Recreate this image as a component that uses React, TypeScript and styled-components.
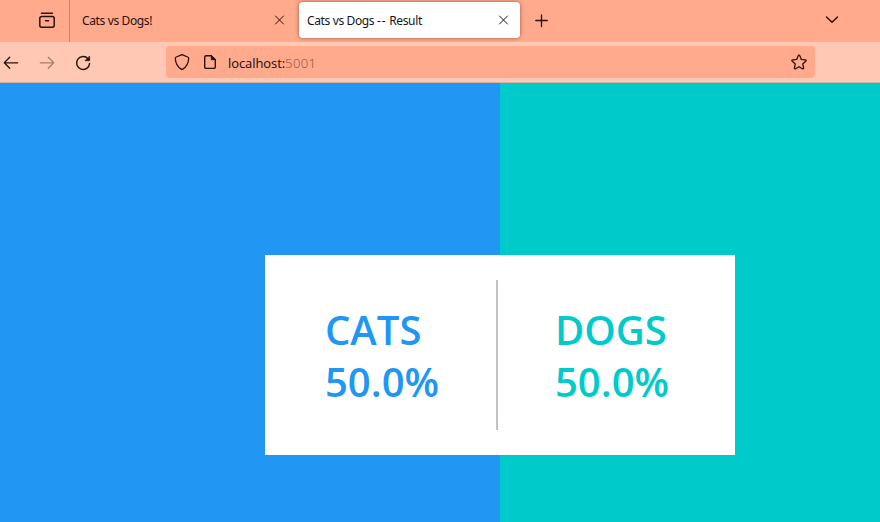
import React from "react";
import styled, { createGlobalStyle } from "styled-components";

const GlobalStyle = createGlobalStyle`
  * { box-sizing: border-box; }
  html, body { margin: 0; padding: 0; overflow: hidden; }
  body { font-family: "Open Sans", "Noto Sans", sans-serif; }
`;

const Window = styled.div`
  width: 880px;
  height: 522px;
  display: flex;
  flex-direction: column;
  overflow: hidden;
`;

const TabBar = styled.div`
  height: 42px;
  flex: none;
  display: flex;
  background: #ffaa8d;
  color: #2b1009;
`;

const ViewSlot = styled.div`
  width: 70px;
  padding: 12px 0 0 38px;
  border-right: 1px solid #cc826b;
`;

const Tab = styled.div<{ $active?: boolean }>`
  width: ${(p) => (p.$active ? "221px" : "229px")};
  height: ${(p) => (p.$active ? "36px" : "38px")};
  margin-top: ${(p) => (p.$active ? "2px" : "1px")};
  padding: 0 ${(p) => (p.$active ? "11px 0 8px" : "14px 0 12px")};
  display: flex;
  align-items: center;
  justify-content: space-between;
  border-radius: 4px;
  background: ${(p) => (p.$active ? "#ffffff" : "transparent")};
  box-shadow: ${(p) => (p.$active ? "0 0 4px rgba(90, 35, 15, 0.6)" : "none")};
  color: ${(p) => (p.$active ? "#15141a" : "#2b1009")};
`;

const TabTitle = styled.span`
  padding-top: 2px;
  font-family: "Noto Sans", "Open Sans", sans-serif;
  font-size: 12px;
  line-height: 16px;
  white-space: nowrap;
  letter-spacing: -0.37px;
`;

const Dashes = styled.span`
  letter-spacing: 0.9px;
`;

const NewTab = styled.div`
  padding: 13px 0 0 14px;
`;

const TabList = styled.div`
  margin-left: auto;
  padding: 12px 40px 0 0;
`;

const NavBar = styled.div`
  height: 41px;
  flex: none;
  display: flex;
  background: #ffc8b5;
  border-bottom: 1px solid #cdb4a8;
  color: #2b1009;
`;

const NavButtons = styled.div`
  width: 166px;
  padding: 13px 0 0 3px;
  display: flex;
  gap: 20px;
`;

const AddressBar = styled.div`
  width: 649px;
  height: 32px;
  margin-top: 4px;
  padding: 0 8px;
  display: flex;
  align-items: center;
  border-radius: 4px;
  background: #ffaa8d;
`;

const Address = styled.span`
  margin-left: 10px;
  padding-top: 2px;
  flex: 1;
  font-size: 13px;
  line-height: 18px;
  letter-spacing: -0.08px;
  color: #1b0b07;
`;

const Port = styled.span`
  font-weight: 300;
  letter-spacing: 0.4px;
  color: #8a4a37;
`;

const Glyph = styled.svg<{ $faded?: boolean; $gap?: number }>`
  display: block;
  flex: none;
  margin-left: ${(p) => p.$gap ?? 0}px;
  opacity: ${(p) => (p.$faded ? 0.4 : 1)};
  fill: none;
  stroke: currentColor;
  stroke-linecap: round;
  stroke-linejoin: round;
`;

const Stage = styled.main`
  flex: 1;
  padding: 172px 0 0 265px;
  background: linear-gradient(to right, #2196f3 500px, #00cbca 500px);
`;

const Card = styled.section`
  width: 470px;
  height: 200px;
  padding: 25px 0;
  display: flex;
  background: #ffffff;
`;

const Choice = styled.div<{ $color: string; $divided?: boolean }>`
  width: ${(p) => (p.$divided ? "233px" : "237px")};
  padding: 24px 0 0 ${(p) => (p.$divided ? "60px" : "57px")};
  border-right: ${(p) => (p.$divided ? "2px solid #c0c4ca" : "0")};
  color: ${(p) => p.$color};
  font-size: 40px;
  font-weight: 600;
  line-height: 52px;
`;

const CloseIcon = () => (
  <Glyph width="11" height="11" viewBox="0 0 11 11" strokeWidth="1">
    <path d="M1.500 1l8 8M9.500 1l-8 8" />
  </Glyph>
);

export default function App() {
  return (
    <>
      <GlobalStyle />
      <Window>
        <TabBar>
          <ViewSlot>
            <Glyph width="18" height="17" viewBox="0 0 18 17" strokeWidth="1.5">
              <path d="M3.5 1.2h10.8" />
              <rect x="1.8" y="4.5" width="14.4" height="10.7" rx="2" />
              <path d="M7.5 8.7h3" />
            </Glyph>
          </ViewSlot>
          <Tab>
            <TabTitle>Cats vs Dogs!</TabTitle>
            <CloseIcon />
          </Tab>
          <Tab $active>
            <TabTitle>
              Cats vs Dogs <Dashes>--</Dashes> Result
            </TabTitle>
            <CloseIcon />
          </Tab>
          <NewTab>
            <Glyph width="15" height="15" viewBox="0 0 15 15" strokeWidth="1.3">
              <path d="M7.5 2v11.5M1.8 7.5h11.5" />
            </Glyph>
          </NewTab>
          <TabList>
            <Glyph width="16" height="16" viewBox="0 0 16 16" strokeWidth="1.4">
              <path d="M2.5 5L8 10.2 13.5 5" />
            </Glyph>
          </TabList>
        </TabBar>
        <NavBar>
          <NavButtons>
            <Glyph width="16" height="16" viewBox="0 0 16 16" strokeWidth="1.3">
              <path d="M14.7 7.8H1.3M6.7 2.3L1.3 7.8l5.4 5.4" />
            </Glyph>
            <Glyph $faded width="16" height="16" viewBox="0 0 16 16" strokeWidth="1.3">
              <path d="M1.3 7.8h13.4M9.3 2.3l5.4 5.5-5.4 5.4" />
            </Glyph>
            <Glyph width="16" height="16" viewBox="0 0 16 16" strokeWidth="1.4">
              <path d="M13 3.7A6.5 6.5 0 1 0 14.6 8.4" />
              <path d="M14.6 1.5v4.2h-4.2z" fill="currentColor" strokeWidth="0.8" />
            </Glyph>
          </NavButtons>
          <AddressBar>
            <Glyph width="16" height="18" viewBox="0 0 16 18" strokeWidth="1.3">
              <path d="M8 1.6l5.7 2.4c.7.3 1.1.7 1 1.5-.3 5-2.6 8.6-5.9 10.6-.5.3-1.1.3-1.6 0C3.9 14.1 1.6 10.5 1.3 5.5c0-.8.3-1.2 1-1.5z" />
            </Glyph>
            <Glyph $gap={13} width="15" height="16" viewBox="0 0 15 16" strokeWidth="1.4">
              <path d="M8.3 1.7H3.2q-1.5 0-1.5 1.5v9.7q0 1.5 1.5 1.5h7.6q1.5 0 1.5-1.5V5.7z" />
              <path d="M8.3 1.7v4h4z" fill="currentColor" strokeWidth="0.9" />
            </Glyph>
            <Address>
              localhost:<Port>5001</Port>
            </Address>
            <Glyph width="17" height="17" viewBox="-0.5 0 17 17" strokeWidth="1.3">
              <path d="M7.7 1.8q.8-1.5 1.6 0l1.5 3.6 4 .4q1.5.3.4 1.5l-3 2.6.9 3.9q.1 1.6-1.3.9l-3.3-2-3.3 2q-1.4.7-1.3-.9l.9-3.9-3-2.6q-1.1-1.2.4-1.5l4-.4z" />
            </Glyph>
          </AddressBar>
        </NavBar>
        <Stage>
          <Card>
            <Choice $color="#2196f3" $divided>
              <div>CATS</div>
              <div>50.0%</div>
            </Choice>
            <Choice $color="#00cbca">
              <div>DOGS</div>
              <div>50.0%</div>
            </Choice>
          </Card>
        </Stage>
      </Window>
    </>
  );
}
